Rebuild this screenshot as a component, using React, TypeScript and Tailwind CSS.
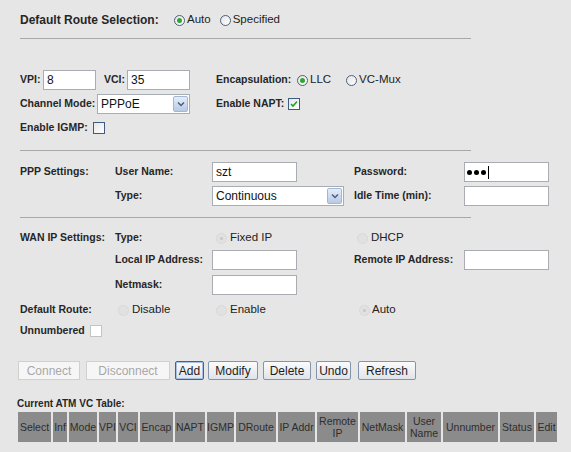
import React from "react";

const label = "text-[10.5px] font-bold text-[#262626] whitespace-nowrap";
const opt = "text-[11.5px] text-[#222] whitespace-nowrap";

const Radio = ({ checked = false, disabled = false }: { checked?: boolean; disabled?: boolean }) => {
  if (disabled) {
    return (
      <span className="flex h-[11px] w-[11px] shrink-0 items-center justify-center rounded-full border border-[#d9d9d9] bg-[#e1e1e1]">
        {checked && <span className="h-[3px] w-[3px] rounded-full bg-[#c6c6c6]" />}
      </span>
    );
  }
  return (
    <span className="flex h-[11px] w-[11px] shrink-0 items-center justify-center rounded-full border border-[#4d5f76] bg-gradient-to-br from-[#e4e4e4] to-white">
      {checked && <span className="h-[5px] w-[5px] rounded-full bg-[#2fa72f]" />}
    </span>
  );
};

const Check = ({ checked = false, muted = false }: { checked?: boolean; muted?: boolean }) => (
  <span
    className={
      muted
        ? "flex h-[12px] w-[12px] shrink-0 items-center justify-center border border-[#c4c4c4] bg-white"
        : "flex h-[12px] w-[12px] shrink-0 items-center justify-center border border-[#3f5b82] bg-gradient-to-br from-[#e6e6e6] to-white"
    }
  >
    {checked && (
      <svg width="8" height="8" viewBox="0 0 8 8">
        <path d="M1 4 L3 6 L7 1.5" fill="none" stroke="#21a321" strokeWidth="1.6" />
      </svg>
    )}
  </span>
);

const TextBox = ({ value = "", w }: { value?: string; w: string }) => (
  <div className={`flex h-[20px] items-center border border-[#a9adb2] bg-white pl-[3px] text-[12px] text-[#111] ${w}`}>
    {value}
  </div>
);

const Select = ({ value, w }: { value: string; w: string }) => (
  <div className={`flex h-[20px] items-center border border-[#a7adb5] bg-white ${w}`}>
    <span className="flex-1 pl-[3px] text-[12px] text-[#111]">{value}</span>
    <span className="mr-px flex h-[16px] w-[15px] items-center justify-center rounded-[2px] border border-[#a3b6d4] bg-gradient-to-b from-[#e6edf8] to-[#b8c9e5]">
      <svg width="8" height="6" viewBox="0 0 8 6">
        <path d="M1 1.5 L4 4.5 L7 1.5" fill="none" stroke="#4a5f86" strokeWidth="1.5" />
      </svg>
    </span>
  </div>
);

const Btn = ({ text, w, disabled = false, focus = false }: { text: string; w: string; disabled?: boolean; focus?: boolean }) => {
  if (disabled) {
    return (
      <div className={`flex h-[19px] items-center justify-center border border-[#d0d0d0] bg-[#f6f6f6] text-[12px] text-[#a8a8a8] ${w}`}>
        {text}
      </div>
    );
  }
  return (
    <div
      className={`flex h-[19px] items-center justify-center rounded-[2px] border bg-gradient-to-b from-[#fbfbfb] to-[#dfe4ea] text-[12px] text-[#1e1e1e] ${
        focus ? "border-[#3c639c] shadow-[inset_0_0_0_1px_#a9c1e4]" : "border-[#8394ab]"
      } ${w}`}
    >
      {text}
    </div>
  );
};

const cols = [
  { t: "Select", w: "w-[33px]" },
  { t: "Inf", w: "w-[14px]" },
  { t: "Mode", w: "w-[28px]" },
  { t: "VPI", w: "w-[17px]" },
  { t: "VCI", w: "w-[20px]" },
  { t: "Encap", w: "w-[33px]" },
  { t: "NAPT", w: "w-[30px]" },
  { t: "IGMP", w: "w-[27px]" },
  { t: "DRoute", w: "w-[40px]" },
  { t: "IP Addr", w: "w-[37px]" },
  { t: "Remote\nIP", w: "w-[41px]" },
  { t: "NetMask", w: "w-[45px]" },
  { t: "User\nName", w: "w-[34px]" },
  { t: "Unnumber", w: "w-[55px]" },
  { t: "Status", w: "w-[34px]" },
  { t: "Edit", w: "w-[21px]" },
];

const gridRow = "grid h-[20px] grid-cols-[95px_97px_142px_110px_85px] items-center";

export default function App() {
  return (
    <div className="h-[452px] w-[571px] overflow-hidden bg-[#e6e6e6] font-['Liberation_Sans',Arial,sans-serif] text-[#222]">
      <div className="pl-[20px] pt-[10px]">
        {/* route selection */}
        <div className="flex h-[20px] items-center">
          <span className="w-[154px] whitespace-nowrap text-[12px] font-bold text-[#262626]">Default Route Selection:</span>
          <Radio checked />
          <span className={`ml-[2px] ${opt}`}>Auto</span>
          <span className="ml-[9px]">
            <Radio />
          </span>
          <span className={`ml-[2px] ${opt}`}>Specified</span>
        </div>
        <div className="mt-[8px] w-[451px] border-t border-[#a8a8a8]" />

        {/* VPI / VCI */}
        <div className="mt-[31px] flex h-[20px] items-center">
          <span className={`w-[23px] ${label}`}>VPI:</span>
          <TextBox value="8" w="w-[53px]" />
          <span className={`ml-[8px] w-[23px] ${label}`}>VCI:</span>
          <TextBox value="35" w="w-[63px]" />
          <span className={`ml-[26px] w-[81px] ${label}`}>Encapsulation:</span>
          <Radio checked />
          <span className={`ml-[2px] ${opt}`}>LLC</span>
          <span className="ml-[15px]">
            <Radio />
          </span>
          <span className={`ml-[2px] ${opt}`}>VC-Mux</span>
        </div>
        <div className="mt-[3px] flex h-[21px] items-center">
          <span className={`w-[77px] ${label}`}>Channel Mode:</span>
          <Select value="PPPoE" w="w-[93px]" />
          <span className={`ml-[26px] w-[72px] ${label}`}>Enable NAPT:</span>
          <Check checked />
        </div>
        <div className="mt-[4px] flex h-[20px] items-center">
          <span className={`w-[73px] ${label}`}>Enable IGMP:</span>
          <Check />
        </div>
        <div className="mt-[12px] w-[451px] border-t border-[#a8a8a8]" />

        {/* PPP settings */}
        <div className={`mt-[11px] ${gridRow}`}>
          <span className={label}>PPP Settings:</span>
          <span className={label}>User Name:</span>
          <TextBox value="szt" w="w-[85px]" />
          <span className={label}>Password:</span>
          <div className="flex h-[20px] w-[85px] items-center gap-[2px] border border-[#a9adb2] bg-white pl-[2px]">
            <span className="h-[5px] w-[5px] rounded-full bg-black" />
            <span className="h-[5px] w-[5px] rounded-full bg-black" />
            <span className="h-[5px] w-[5px] rounded-full bg-black" />
            <span className="h-[13px] w-px bg-black" />
          </div>
        </div>
        <div className={`mt-[4px] ${gridRow}`}>
          <span />
          <span className={label}>Type:</span>
          <Select value="Continuous" w="w-[132px]" />
          <span className={label}>Idle Time (min):</span>
          <TextBox w="w-[85px]" />
        </div>
        <div className="mt-[11px] w-[451px] border-t border-[#a8a8a8]" />

        {/* WAN IP settings */}
        <div className={`mt-[10px] ${gridRow}`}>
          <span className={label}>WAN IP Settings:</span>
          <span className={label}>Type:</span>
          <div className="flex items-center pl-[4px]">
            <Radio checked disabled />
            <span className={`ml-[3px] ${opt}`}>Fixed IP</span>
          </div>
          <div className="flex items-center pl-[3px]">
            <Radio disabled />
            <span className={`ml-[3px] ${opt}`}>DHCP</span>
          </div>
          <span />
        </div>
        <div className={`mt-[2px] ${gridRow}`}>
          <span />
          <span className={label}>Local IP Address:</span>
          <TextBox w="w-[85px]" />
          <span className={label}>Remote IP Address:</span>
          <TextBox w="w-[85px]" />
        </div>
        <div className={`mt-[5px] ${gridRow}`}>
          <span />
          <span className={label}>Netmask:</span>
          <TextBox w="w-[85px]" />
          <span />
          <span />
        </div>
        <div className={`mt-[5px] ${gridRow}`}>
          <span className={label}>Default Route:</span>
          <div className="flex items-center pl-[3px]">
            <Radio disabled />
            <span className={`ml-[3px] ${opt}`}>Disable</span>
          </div>
          <div className="flex items-center pl-[4px]">
            <Radio disabled />
            <span className={`ml-[3px] ${opt}`}>Enable</span>
          </div>
          <div className="flex items-center pl-[5px]">
            <Radio checked disabled />
            <span className={`ml-[2px] ${opt}`}>Auto</span>
          </div>
          <span />
        </div>
        <div className="mt-[1px] flex h-[20px] items-center">
          <span className={`w-[70px] ${label}`}>Unnumbered</span>
          <Check muted />
        </div>

        {/* buttons */}
        <div className="-ml-[2px] mt-[20px] flex items-center">
          <Btn text="Connect" w="w-[62px]" disabled />
          <span className="ml-[6px]">
            <Btn text="Disconnect" w="w-[84px]" disabled />
          </span>
          <span className="ml-[5px]">
            <Btn text="Add" w="w-[29px]" focus />
          </span>
          <span className="ml-[4px]">
            <Btn text="Modify" w="w-[50px]" />
          </span>
          <span className="ml-[5px]">
            <Btn text="Delete" w="w-[48px]" />
          </span>
          <span className="ml-[5px]">
            <Btn text="Undo" w="w-[35px]" />
          </span>
          <span className="ml-[7px]">
            <Btn text="Refresh" w="w-[58px]" />
          </span>
        </div>

        <div className="-ml-[3px] mt-[16px] flex h-[14px] items-center whitespace-nowrap text-[10px] font-bold text-[#262626]">
          Current ATM VC Table:
        </div>

        {/* table header */}
        <div className="-ml-[2px] mt-[2px] flex gap-[2px]">
          {cols.map((c) => (
            <div
              key={c.t}
              className={`flex h-[30px] shrink-0 items-center justify-center whitespace-pre bg-[#8b8b8b] text-center text-[10.5px] leading-[12px] text-[#2e2e2e] ${c.w}`}
            >
              {c.t}
            </div>
          ))}
        </div>
      </div>
    </div>
  );
}
